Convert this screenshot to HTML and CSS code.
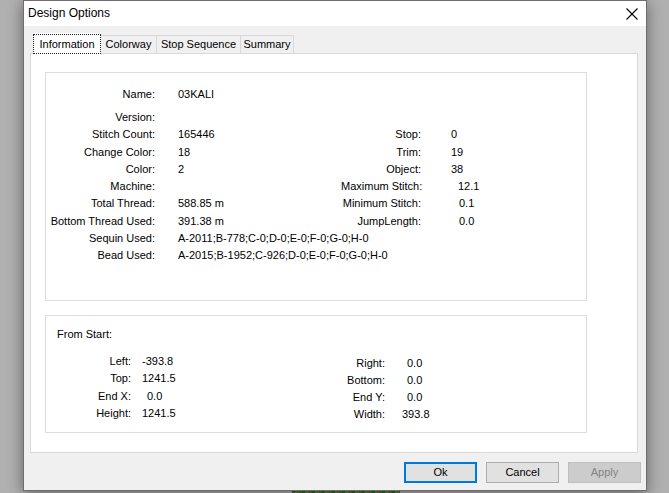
FILE: index.html
```html
<!DOCTYPE html>
<html>
<head>
<meta charset="utf-8">
<link rel="stylesheet" href="styles.css">
</head>
<body>
<div class="desk">
  <div class="art"></div>
  <div class="dialog">
    <div class="titlebar">
      <span class="title">Design Options</span>
      <svg class="close" width="12" height="12" viewBox="0 0 12 12"><path d="M0.5 0.5 L11.5 11.5 M11.5 0.5 L0.5 11.5" stroke="#000" stroke-width="1.1" fill="none"/></svg>
    </div>
    <div class="body">
      <div class="tabs">
        <div class="tab active"><span class="focus">Information</span></div>
        <div class="tab t-color">Colorway</div>
        <div class="tab t-stop">Stop Sequence</div>
        <div class="tab t-sum">Summary</div>
      </div>
      <div class="panel">
        <div class="group g1">
          <div class="info">
            <div class="lbl">Name:</div><div class="val span3">03KALI</div>
            <div class="lbl">Version:</div><div class="val span3"></div>
            <div class="lbl">Stitch Count:</div><div class="val">165446</div><div class="lbl">Stop:</div><div class="rval">0</div>
            <div class="lbl">Change Color:</div><div class="val">18</div><div class="lbl">Trim:</div><div class="rval">19</div>
            <div class="lbl">Color:</div><div class="val">2</div><div class="lbl">Object:</div><div class="rval">38</div>
            <div class="lbl">Machine:</div><div class="val"></div><div class="lbl">Maximum Stitch:</div><div class="rval s7">12.1</div>
            <div class="lbl">Total Thread:</div><div class="val">588.85 m</div><div class="lbl">Minimum Stitch:</div><div class="rval s8">0.1</div>
            <div class="lbl">Bottom Thread Used:</div><div class="val">391.38 m</div><div class="lbl">JumpLength:</div><div class="rval s8">0.0</div>
            <div class="lbl">Sequin Used:</div><div class="val span3">A-2011;B-778;C-0;D-0;E-0;F-0;G-0;H-0</div>
            <div class="lbl">Bead Used:</div><div class="val span3">A-2015;B-1952;C-926;D-0;E-0;F-0;G-0;H-0</div>
          </div>
        </div>
        <div class="group g2">
          <div class="from">From Start:</div>
          <div class="cols">
            <div class="pos left">
              <div class="lbl">Left:</div><div class="pval">-393.8</div>
              <div class="lbl">Top:</div><div class="pval">1241.5</div>
              <div class="lbl">End X:</div><div class="pval p5">0.0</div>
              <div class="lbl">Height:</div><div class="pval">1241.5</div>
            </div>
            <div class="pos right">
              <div class="lbl">Right:</div><div class="pval">0.0</div>
              <div class="lbl">Bottom:</div><div class="pval">0.0</div>
              <div class="lbl">End Y:</div><div class="pval">0.0</div>
              <div class="lbl">Width:</div><div class="pval m5">393.8</div>
            </div>
          </div>
        </div>
      </div>
      <div class="buttons">
        <div class="btn default">Ok</div>
        <div class="btn">Cancel</div>
        <div class="btn disabled">Apply</div>
      </div>
    </div>
  </div>
</div>
</body>
</html>
```
FILE: styles.css
```css
html, body {
  margin: 0;
  padding: 0;
}
body {
  width: 669px;
  height: 493px;
  overflow: hidden;
  background: #b0b0b0;
  font-family: "Liberation Sans", Arial, sans-serif;
  font-size: 11px;
  color: #000;
}
.desk {
  position: relative;
  width: 669px;
  height: 493px;
}
.art {
  position: absolute;
  left: 292px;
  top: 470px;
  width: 108px;
  height: 30px;
  background:
    repeating-linear-gradient(90deg, #2f6b22 0 3px, #5c8a3a 3px 5px, #7a6a4a 5px 7px, #3d7a2a 7px 10px);
}
.dialog {
  position: relative;
  z-index: 1;
  margin-left: 23px;
  width: 624px;
  height: 491px;
  box-sizing: border-box;
  border: 1px solid #6e6e6e;
  background: #f0f0f0;
  box-shadow: 0 3px 14px rgba(0, 0, 0, 0.45);
  display: flex;
  flex-direction: column;
}
.titlebar {
  height: 25px;
  background: #fff;
  display: flex;
  align-items: center;
  justify-content: space-between;
  padding: 0 8px 0 4px;
}
.title {
  font-size: 12px;
  line-height: 25px;
}
.close {
  display: block;
}
.body {
  flex: 1;
  background: #f0f0f0;
}
.tabs {
  display: flex;
  align-items: flex-end;
  height: 20px;
  padding: 7px 0 0 9px;
}
.tab {
  box-sizing: border-box;
  height: 18px;
  line-height: 17px;
  text-align: center;
  border: 1px solid #d9d9d9;
  border-bottom: none;
  background: #f0f0f0;
  margin-left: -1px;
}
.tab.active {
  position: relative;
  z-index: 2;
  height: 21px;
  width: 68px;
  margin-left: 0;
  margin-bottom: -1px;
  background: #fff;
  border-color: #fff;
  padding: 0;
}
.tab.active .focus {
  display: block;
  box-sizing: border-box;
  margin-left: -1px;
  width: 68px;
  height: 20px;
  line-height: 19px;
  border: 1px dotted #222;
}
.t-color { width: 57px; }
.t-stop { width: 85px; }
.t-sum { width: 54px; }
.panel {
  position: relative;
  box-sizing: border-box;
  margin-left: 6px;
  width: 608px;
  height: 400px;
  background: #fff;
  border: 1px solid #d9d9d9;
  padding: 18px 0 0 14px;
}
.group {
  box-sizing: border-box;
  width: 542px;
  border: 1px solid #dcdcdc;
  background: #fff;
}
.g1 {
  height: 229px;
  padding-top: 13px;
}
.g2 {
  height: 118px;
  margin-top: 14px;
  padding: 10px 0 0 11px;
}
.info {
  display: grid;
  grid-template-columns: 109px 186px 80px 1fr;
  grid-template-rows: 23px repeat(9, 17.25px);
  line-height: 17.25px;
  white-space: nowrap;
}
.lbl {
  text-align: right;
}
.val {
  padding-left: 23px;
}
.span3 {
  grid-column: span 3;
}
.rval {
  padding-left: 30px;
}
.rval.s7 { padding-left: 37px; }
.rval.s8 { padding-left: 38px; }
.from {
  line-height: 17px;
}
.cols {
  display: flex;
  margin-top: 10px;
}
.pos {
  display: grid;
  white-space: nowrap;
}
.pos.left {
  width: 268px;
  grid-template-columns: 74px 1fr;
  grid-auto-rows: 17.33px;
  line-height: 17.33px;
}
.pos.right {
  margin-top: 2px;
  grid-template-columns: 60px 1fr;
  grid-auto-rows: 17px;
  line-height: 17px;
}
.left .pval { padding-left: 11px; }
.left .pval.p5 { padding-left: 16px; }
.right .pval { padding-left: 22px; }
.right .pval.m5 { padding-left: 17px; }
.buttons {
  display: flex;
  justify-content: flex-end;
  gap: 9px;
  padding: 9px 5px 0 0;
}
.btn {
  box-sizing: border-box;
  width: 73px;
  height: 21px;
  line-height: 19px;
  text-align: center;
  background: #e1e1e1;
  border: 1px solid #adadad;
}
.btn.default {
  border: 2px solid #0078d7;
  line-height: 17px;
}
.btn.disabled {
  background: #cccccc;
  border-color: #bfbfbf;
  color: #838383;
}
```
